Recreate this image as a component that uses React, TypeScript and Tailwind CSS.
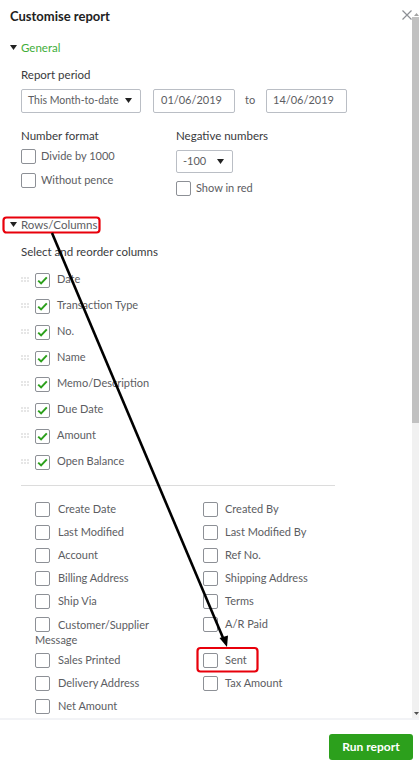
import React from "react";

function Box({ checked }: { checked?: boolean }) {
  return (
    <span className="inline-flex w-[15px] h-[15px] shrink-0 items-center justify-center rounded-[2px] border border-[#8d9096] bg-white">
      {checked && (
        <svg width="11" height="9" viewBox="0 0 11 9">
          <path d="M1.2 4.6 L4.1 7.4 L9.8 1.4" stroke="#2ca01c" strokeWidth="2" fill="none" />
        </svg>
      )}
    </span>
  );
}

function Caret() {
  return (
    <svg width="7" height="5" viewBox="0 0 7 5">
      <path d="M0 0 L7 0 L3.5 5 Z" fill="#222" />
    </svg>
  );
}

function Dots() {
  return (
    <svg width="8" height="5" viewBox="0 0 8 5" className="shrink-0">
      {[0.5, 3.5, 6.5].map((x) =>
        [0.5, 3.5].map((y) => <rect key={`${x}-${y}`} x={x} y={y} width="1" height="1" fill="#9a9a9a" />)
      )}
    </svg>
  );
}

const checkedCols = [
  "Date",
  "Transaction Type",
  "No.",
  "Name",
  "Memo/Description",
  "Due Date",
  "Amount",
  "Open Balance",
];

const gridRows: [string, string | null][] = [
  ["Create Date", "Created By"],
  ["Last Modified", "Last Modified By"],
  ["Account", "Ref No."],
  ["Billing Address", "Shipping Address"],
  ["Ship Via", "Terms"],
  ["__CUSTOMER__", "A/R Paid"],
  ["Sales Printed", "Sent"],
  ["Delivery Address", "Tax Amount"],
  ["Net Amount", null],
];

function Item({ label, gap }: { label: string; gap: string }) {
  return (
    <div className={`flex items-center h-[15px] ${gap}`}>
      <Box />
      <span className="text-[11px] text-[#5c5d62] whitespace-nowrap">{label}</span>
    </div>
  );
}

export default function App() {
  return (
    <div className="relative w-[419px] h-[767px] bg-white flex flex-col overflow-hidden font-[Lato,sans-serif]">
      <div className="flex h-[718px]">
        <div className="flex-1 pl-[10px] flex flex-col">
          {/* Title */}
          <div className="mt-[7px] h-[20px] flex items-center justify-between">
            <span className="text-[13px] font-bold text-[#222]">Customise report</span>
            <svg width="10" height="10" viewBox="0 0 10 10" className="mt-[-3px]">
              <path d="M0.5 0.5 L9.5 9.5 M9.5 0.5 L0.5 9.5" stroke="#8d9096" strokeWidth="1.2" />
            </svg>
          </div>

          {/* General */}
          <div className="mt-[13px] h-[16px] flex items-center gap-[4px]">
            <Caret />
            <span className="text-[11.5px] text-[#3fae3a]">General</span>
          </div>

          <div className="pl-[11px] flex flex-col">
            <div className="mt-[12px] h-[14px] flex items-center text-[11.5px] text-[#393a3d]">Report period</div>
            <div className="mt-[7px] h-[24px] flex items-center">
              <div className="w-[120px] h-[24px] border border-[#babec5] rounded-[2px] flex items-center justify-between pl-[6px] pr-[8px]">
                <span className="text-[10.5px] text-[#5c5d62]">This Month-to-date</span>
                <Caret />
              </div>
              <div className="ml-[12px] w-[82px] h-[24px] border border-[#babec5] rounded-[2px] flex items-center pl-[7px]">
                <span className="text-[11px] text-[#5c5d62]">01/06/2019</span>
              </div>
              <span className="ml-[10px] w-[21px] text-[11px] text-[#5c5d62]">to</span>
              <div className="w-[81px] h-[24px] border border-[#babec5] rounded-[2px] flex items-center pl-[6px]">
                <span className="text-[11px] text-[#5c5d62]">14/06/2019</span>
              </div>
            </div>

            <div className="mt-[16px] flex">
              <div className="w-[155px] flex flex-col">
                <div className="h-[14px] flex items-center text-[11.5px] text-[#393a3d]">Number format</div>
                <div className="mt-[6px]">
                  <Item label="Divide by 1000" gap="gap-[5px]" />
                </div>
                <div className="mt-[9px]">
                  <Item label="Without pence" gap="gap-[5px]" />
                </div>
              </div>
              <div className="flex flex-col">
                <div className="h-[14px] flex items-center text-[11.5px] text-[#393a3d]">Negative numbers</div>
                <div className="mt-[7px] w-[57px] h-[23px] border border-[#babec5] rounded-[2px] flex items-center justify-between pl-[6px] pr-[8px]">
                  <span className="text-[11px] text-[#5c5d62]">-100</span>
                  <Caret />
                </div>
                <div className="mt-[8px]">
                  <Item label="Show in red" gap="gap-[5px]" />
                </div>
              </div>
            </div>
          </div>

          {/* Rows/Columns */}
          <div className="mt-[21px] h-[16px] flex items-center gap-[4px]">
            <Caret />
            <span className="text-[11.5px] text-[#5c5d62]">Rows/Columns</span>
          </div>

          <div className="pl-[11px] flex flex-col">
            <div className="mt-[12px] h-[14px] flex items-center text-[11.5px] text-[#393a3d]">Select and reorder columns</div>
            <div className="mt-[13px] flex flex-col gap-[11px]">
              {checkedCols.map((c) => (
                <div key={c} className="h-[15px] flex items-center">
                  <Dots />
                  <span className="ml-[6px]">
                    <Box checked />
                  </span>
                  <span className="ml-[7px] text-[11px] text-[#5c5d62] whitespace-nowrap">{c}</span>
                </div>
              ))}
            </div>

            <div className="mt-[16px] w-[314px] h-[1px] bg-[#dcdcdc]" />

            <div className="mt-[16px] pl-[14px] grid grid-cols-[168px_168px]">
              {gridRows.map(([a, b], i) => (
                <React.Fragment key={i}>
                  {a === "__CUSTOMER__" ? (
                    <div className="h-[36px] text-[11px] leading-[15px] text-[#5c5d62]">
                      <span className="inline-flex align-top mr-[8px]">
                        <Box />
                      </span>
                      Customer/Supplier
                      <br />
                      Message
                    </div>
                  ) : (
                    <div className="h-[23px]">
                      <Item label={a} gap="gap-[8px]" />
                    </div>
                  )}
                  <div className={a === "__CUSTOMER__" ? "h-[36px]" : "h-[23px]"}>
                    {b && <Item label={b} gap="gap-[7px]" />}
                  </div>
                </React.Fragment>
              ))}
            </div>
          </div>
        </div>

        {/* scrollbar */}
        <div className="w-[7px] flex flex-col pt-[13px] bg-white">
          <div className="h-[4px] flex justify-end">
            <svg width="5" height="3" viewBox="0 0 5 3">
              <path d="M0 3 L2.5 0 L5 3 Z" fill="#a3a3a3" />
            </svg>
          </div>
          <div className="h-[406px] bg-[#c1c1c1]" />
          <div className="flex-1 bg-[#f1f1f1] flex flex-col justify-end items-end pb-[3px]">
            <svg width="5" height="3" viewBox="0 0 5 3">
              <path d="M0 0 L5 0 L2.5 3 Z" fill="#505050" />
            </svg>
          </div>
        </div>
      </div>

      <div className="h-[2px] bg-[#f2f3f6]" />

      <div className="flex-1 flex justify-end items-start pt-[14px] pr-[6px]">
        <button className="w-[84px] h-[26px] rounded-[3px] bg-[#2ca01c] text-white text-[12px] font-bold">
          Run report
        </button>
      </div>

      {/* annotations */}
      <svg className="absolute inset-0 pointer-events-none" width="419" height="767" viewBox="0 0 419 767">
        <rect x="3.5" y="217.5" width="96" height="15" rx="3" fill="none" stroke="#e8000b" strokeWidth="2.2" />
        <rect x="197.5" y="648" width="60" height="23.5" rx="3" fill="none" stroke="#e8000b" strokeWidth="2.2" />
        <line x1="52" y1="233" x2="223.5" y2="639" stroke="#000" strokeWidth="2.6" />
        <path d="M227 647 L219.5 638 L228 635.5 Z" fill="#000" />
      </svg>
    </div>
  );
}
